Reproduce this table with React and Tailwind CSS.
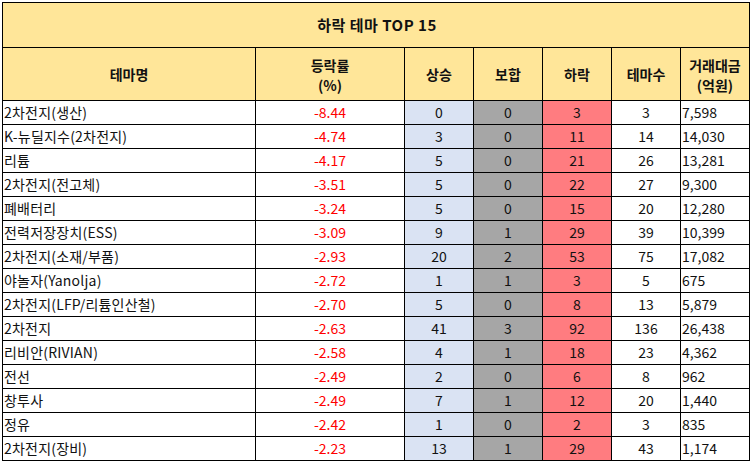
const rows = [
  ["2차전지(생산)", "-8.44", 0, 0, 3, 3, "7,598"],
  ["K-뉴딜지수(2차전지)", "-4.74", 3, 0, 11, 14, "14,030"],
  ["리튬", "-4.17", 5, 0, 21, 26, "13,281"],
  ["2차전지(전고체)", "-3.51", 5, 0, 22, 27, "9,300"],
  ["폐배터리", "-3.24", 5, 0, 15, 20, "12,280"],
  ["전력저장장치(ESS)", "-3.09", 9, 1, 29, 39, "10,399"],
  ["2차전지(소재/부품)", "-2.93", 20, 2, 53, 75, "17,082"],
  ["야놀자(Yanolja)", "-2.72", 1, 1, 3, 5, "675"],
  ["2차전지(LFP/리튬인산철)", "-2.70", 5, 0, 8, 13, "5,879"],
  ["2차전지", "-2.63", 41, 3, 92, 136, "26,438"],
  ["리비안(RIVIAN)", "-2.58", 4, 1, 18, 23, "4,362"],
  ["전선", "-2.49", 2, 0, 6, 8, "962"],
  ["창투사", "-2.49", 7, 1, 12, 20, "1,440"],
  ["정유", "-2.42", 1, 0, 2, 3, "835"],
  ["2차전지(장비)", "-2.23", 13, 1, 29, 43, "1,174"],
]

const App = () => {
  return (
    <div className="w-[753px] h-[464px] bg-white pt-[2px] pl-[2px] text-[14px] text-[#111] font-['Malgun_Gothic','Noto_Sans_CJK_KR',sans-serif]">
      <div className="w-[748px] bg-black p-px">
        <div className="grid grid-cols-[252px_148px_68px_68px_68px_68px_68px] gap-px">
          {/* Title */}
          <div className="col-span-7 h-[44px] bg-[#FFE699] flex items-center justify-center font-bold text-[15px] tracking-[0.5px] pl-[2px]">
            하락 테마 TOP 15
          </div>

          {/* Header */}
          <div className="h-[52px] bg-[#FFE699] flex items-center justify-center font-bold">테마명</div>
          <div className="h-[52px] bg-[#FFE699] flex flex-col items-center justify-center font-bold leading-[20px] pt-[2px]">
            <span>등락률</span>
            <span>(%)</span>
          </div>
          <div className="h-[52px] bg-[#FFE699] flex items-center justify-center font-bold">상승</div>
          <div className="h-[52px] bg-[#FFE699] flex items-center justify-center font-bold">보합</div>
          <div className="h-[52px] bg-[#FFE699] flex items-center justify-center font-bold">하락</div>
          <div className="h-[52px] bg-[#FFE699] flex items-center justify-center font-bold">테마수</div>
          <div className="h-[52px] bg-[#FFE699] flex flex-col items-center justify-center font-bold leading-[20px] pt-[2px]">
            <span>거래대금</span>
            <span>(억원)</span>
          </div>

          {/* Rows */}
          {rows.map((r) => (
            <div key={r[0]} className="contents">
              <div className="h-[23px] bg-white flex items-center pl-px tracking-[0.2px]">{r[0]}</div>
              <div className="h-[23px] bg-white flex items-center justify-center text-[#FF0000]">{r[1]}</div>
              <div className="h-[23px] bg-[#DAE3F3] flex items-center justify-center">{r[2]}</div>
              <div className="h-[23px] bg-[#A6A6A6] flex items-center justify-center">{r[3]}</div>
              <div className="h-[23px] bg-[#FF7C80] flex items-center justify-center">{r[4]}</div>
              <div className="h-[23px] bg-white flex items-center justify-center">{r[5]}</div>
              <div className="h-[23px] bg-white flex items-center pl-px">{r[6]}</div>
            </div>
          ))}
        </div>
      </div>
    </div>
  )
}

export default App
